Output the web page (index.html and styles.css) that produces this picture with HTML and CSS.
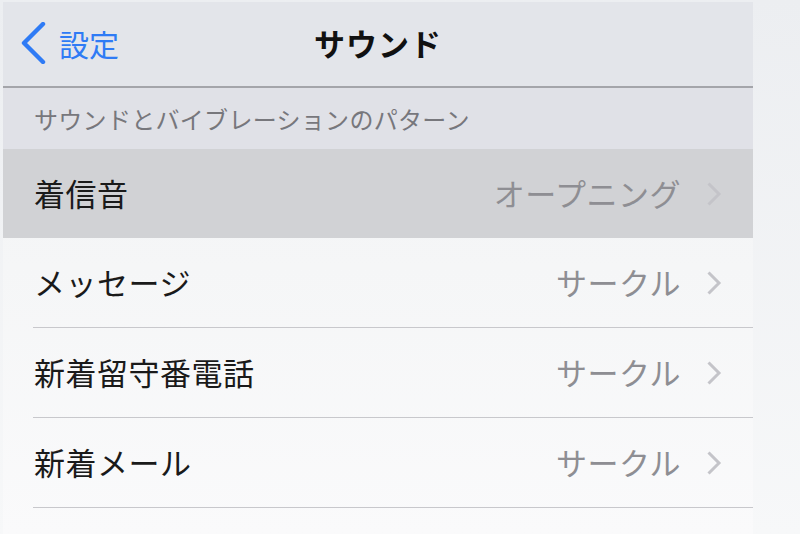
FILE: index.html
```html
<!DOCTYPE html>
<html lang="ja">
<head>
<meta charset="utf-8">
<title>サウンド</title>
<link rel="stylesheet" href="styles.css">
</head>
<body>
<div class="screen">
  <header class="navbar">
    <a class="back">
      <svg class="back-icon" width="26" height="42" viewBox="0 0 26 42"><polyline points="23,2 4,21 23,40" fill="none" stroke="#2f7bf5" stroke-width="4.4" stroke-linecap="round" stroke-linejoin="round"/></svg>
      <span class="back-label">設定</span>
    </a>
    <h1 class="title">サウンド</h1>
    <span></span>
  </header>
  <div class="section-header">サウンドとバイブレーションのパターン</div>
  <ul class="list">
    <li class="row selected"><span class="label">着信音</span><span class="value">オープニング</span><svg class="chev" width="16" height="26" viewBox="0 0 16 26"><polyline points="2.5,2.5 13,13 2.5,23.5" fill="none" stroke="#c4c4c9" stroke-width="3"/></svg></li>
    <li class="row"><span class="label">メッセージ</span><span class="value">サークル</span><svg class="chev" width="16" height="26" viewBox="0 0 16 26"><polyline points="2.5,2.5 13,13 2.5,23.5" fill="none" stroke="#c4c4c9" stroke-width="3"/></svg></li>
    <li class="row"><span class="label">新着留守番電話</span><span class="value">サークル</span><svg class="chev" width="16" height="26" viewBox="0 0 16 26"><polyline points="2.5,2.5 13,13 2.5,23.5" fill="none" stroke="#c4c4c9" stroke-width="3"/></svg></li>
    <li class="row"><span class="label">新着メール</span><span class="value">サークル</span><svg class="chev" width="16" height="26" viewBox="0 0 16 26"><polyline points="2.5,2.5 13,13 2.5,23.5" fill="none" stroke="#c4c4c9" stroke-width="3"/></svg></li>
    <li class="row"></li>
  </ul>
</div>
</body>
</html>
```
FILE: styles.css
```css
html, body {
  margin: 0;
  padding: 0;
}
body {
  width: 800px;
  height: 534px;
  overflow: hidden;
  background: linear-gradient(#eceef1, #f7f8f9);
  font-family: "Noto Sans CJK JP", "Noto Sans", sans-serif;
}
.screen {
  margin: 2px 0 0 3px;
  width: 750px;
  height: 532px;
  overflow: hidden;
  background: linear-gradient(#f1f2f4 0%, #f5f6f7 50%, #fafafb 100%);
}
.navbar {
  height: 84px;
  display: grid;
  grid-template-columns: 1fr auto 1fr;
  align-items: center;
  background: #e3e5ea;
  border-bottom: 2px solid #a4a5aa;
}
.back {
  display: flex;
  align-items: center;
  gap: 13px;
  padding-left: 17px;
  color: #2f7bf5;
  margin-top: -2px;
}
.back-icon {
  display: block;
}
.back-label {
  font-size: 30px;
  line-height: 1;
}
.title {
  margin: 0;
  font-size: 31px;
  font-weight: 700;
  letter-spacing: 1px;
  color: #111;
  margin-top: -3px;
}
.section-header {
  height: 61px;
  display: flex;
  align-items: center;
  padding-left: 31px;
  background: #e0e1e7;
  color: #77777c;
  font-size: 24px;
  letter-spacing: 0.3px;
}
.list {
  list-style: none;
  margin: 0;
  padding: 0;
}
.row {
  height: 89px;
  display: flex;
  align-items: center;
  padding: 0 31px 1px 31px;
  background-image: linear-gradient(#c8c8cc, #c8c8cc);
  background-size: calc(100% - 30px) 1px;
  background-position: right bottom;
  background-repeat: no-repeat;
}
.row.selected {
  background: #d1d2d5;
  padding-bottom: 0;
}
.label {
  font-size: 31px;
  letter-spacing: 0.5px;
  color: #1a1a1a;
  line-height: 1;
  margin-top: -2px;
}
.value {
  margin-left: auto;
  font-size: 31px;
  letter-spacing: 0.5px;
  color: #8e8e93;
  line-height: 1;
  margin-top: -2px;
}
.chev {
  display: block;
  margin-left: 25px;
}
```
